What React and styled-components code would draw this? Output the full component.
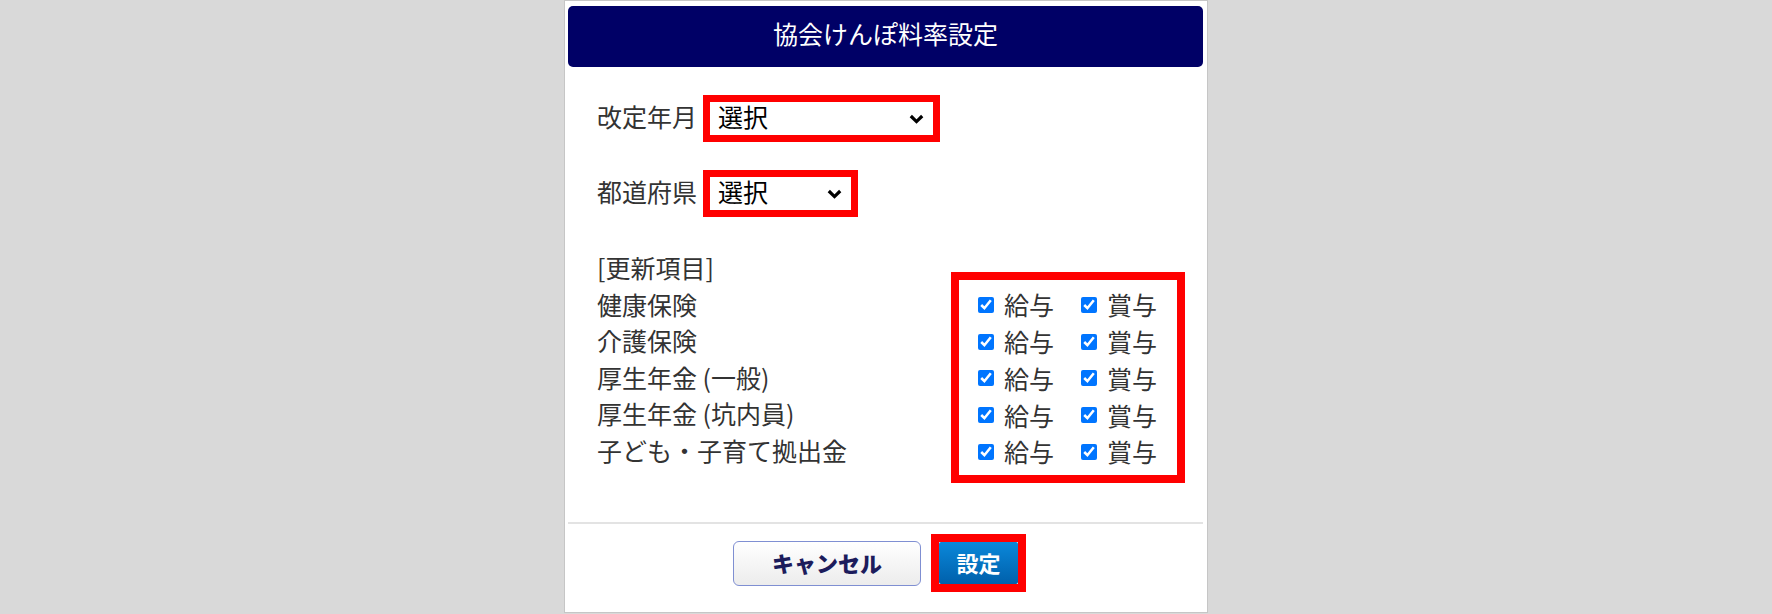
import React from "react";
import styled, { createGlobalStyle } from "styled-components";

const GlobalStyle = createGlobalStyle`
  html, body {
    margin: 0;
    padding: 0;
    background: #d9d9d9;
  }
  body {
    font-family: "Noto Sans CJK JP", "Noto Sans", sans-serif;
  }
  * { box-sizing: border-box; }
`;

const Page = styled.div`
  display: flex;
  justify-content: center;
  height: 614px;
`;

const Dialog = styled.div`
  width: 644px;
  height: 613px;
  background: #fff;
  border: 1px solid #c6c6c6;
  padding: 5px 4px 0 3px;
  display: flex;
  flex-direction: column;
`;

const Header = styled.div`
  height: 61px;
  flex: none;
  background: #000066;
  border-radius: 5px;
  color: #fff;
  font-size: 25px;
  display: flex;
  align-items: center;
  justify-content: center;
  padding-bottom: 7px;
`;

const Body = styled.div`
  padding: 28px 18px 0 29px;
  color: #333;
  font-size: 25px;
`;

const FieldRow = styled.div`
  display: flex;
  align-items: center;
  gap: 6px;
  height: 47px;
  & + & {
    margin-top: 28px;
  }
`;

const FieldLabel = styled.span`
  line-height: 1;
  margin-bottom: 5px;
`;

const RedFrame = styled.div`
  border: ${(p) => p.$w || 7}px solid #ff0000;
  flex: none;
`;

const SelectBox = styled.div`
  width: ${(p) => p.$width}px;
  height: 33px;
  background: #fff;
  color: #000;
  display: flex;
  align-items: center;
  justify-content: space-between;
  padding: 0 9px 0 8px;
  font-size: 25px;
  line-height: 1;
`;

const SelectText = styled.span`
  margin-bottom: 5px;
`;

const Section = styled.div`
  display: flex;
  align-items: flex-start;
  margin-top: 32px;
`;

const LabelColumn = styled.div`
  line-height: 36.5px;
  font-size: 25px;
`;

const CheckFrame = styled.div`
  margin-left: auto;
  margin-top: 23px;
  width: 234px;
  border: 8px solid #ff0000;
  padding: 6.6px 0 5px 19px;
`;

const CheckRow = styled.div`
  height: 36.7px;
  display: flex;
  align-items: center;
`;

const CheckItem = styled.label`
  display: inline-flex;
  align-items: center;
  gap: 10px;
  width: ${(p) => (p.$first ? "103px" : "auto")};
  font-size: 25px;
  line-height: 1;
  color: #333;
`;

const Check = styled.input`
  width: 16px;
  height: 16px;
  margin: 0;
  accent-color: #0075ff;
`;

const Divider = styled.div`
  margin-top: 39px;
  height: 2px;
  background: #e3e3e3;
  flex: none;
`;

const Footer = styled.div`
  display: flex;
  justify-content: center;
  align-items: center;
  gap: 10px;
  padding-top: 10px;
  padding-right: 12px;
`;

const CancelButton = styled.button`
  width: 188px;
  height: 45px;
  border: 1.5px solid #7f8fd2;
  border-radius: 6px;
  background: linear-gradient(#ffffff, #ececec);
  color: #1c1c5c;
  font-family: inherit;
  font-weight: 900;
  font-size: 22px;
  line-height: 1;
  padding: 0 0 3px;
`;

const PrimaryButton = styled.button`
  display: block;
  width: 79px;
  height: 42px;
  border: none;
  border-radius: 2px;
  background: linear-gradient(#0a88da, #0060ab);
  color: #fff;
  font-family: inherit;
  font-weight: 700;
  font-size: 22px;
  line-height: 1;
  padding: 0 0 3px;
`;

const Chevron = () => (
  <svg width="15" height="10" viewBox="0 0 15 10">
    <path d="M1.8 2 L7.5 7.6 L13.2 2" fill="none" stroke="#000" strokeWidth="3.2" />
  </svg>
);

const rows = [
  "健康保険",
  "介護保険",
  "厚生年金 (一般)",
  "厚生年金 (坑内員)",
  "子ども・子育て拠出金",
];

export default function App() {
  return (
    <>
      <GlobalStyle />
      <Page>
        <Dialog>
          <Header>協会けんぽ料率設定</Header>
          <Body>
            <FieldRow>
              <FieldLabel>改定年月</FieldLabel>
              <RedFrame>
                <SelectBox $width={223}>
                  <SelectText>選択</SelectText>
                  <Chevron />
                </SelectBox>
              </RedFrame>
            </FieldRow>
            <FieldRow>
              <FieldLabel>都道府県</FieldLabel>
              <RedFrame>
                <SelectBox $width={141}>
                  <SelectText>選択</SelectText>
                  <Chevron />
                </SelectBox>
              </RedFrame>
            </FieldRow>
            <Section>
              <LabelColumn>
                <div>[更新項目]</div>
                {rows.map((r) => (
                  <div key={r}>{r}</div>
                ))}
              </LabelColumn>
              <CheckFrame>
                {rows.map((r) => (
                  <CheckRow key={r}>
                    <CheckItem $first>
                      <Check type="checkbox" defaultChecked />
                      給与
                    </CheckItem>
                    <CheckItem>
                      <Check type="checkbox" defaultChecked />
                      賞与
                    </CheckItem>
                  </CheckRow>
                ))}
              </CheckFrame>
            </Section>
          </Body>
          <Divider />
          <Footer>
            <CancelButton>キャンセル</CancelButton>
            <RedFrame $w={8}>
              <PrimaryButton>設定</PrimaryButton>
            </RedFrame>
          </Footer>
        </Dialog>
      </Page>
    </>
  );
}
